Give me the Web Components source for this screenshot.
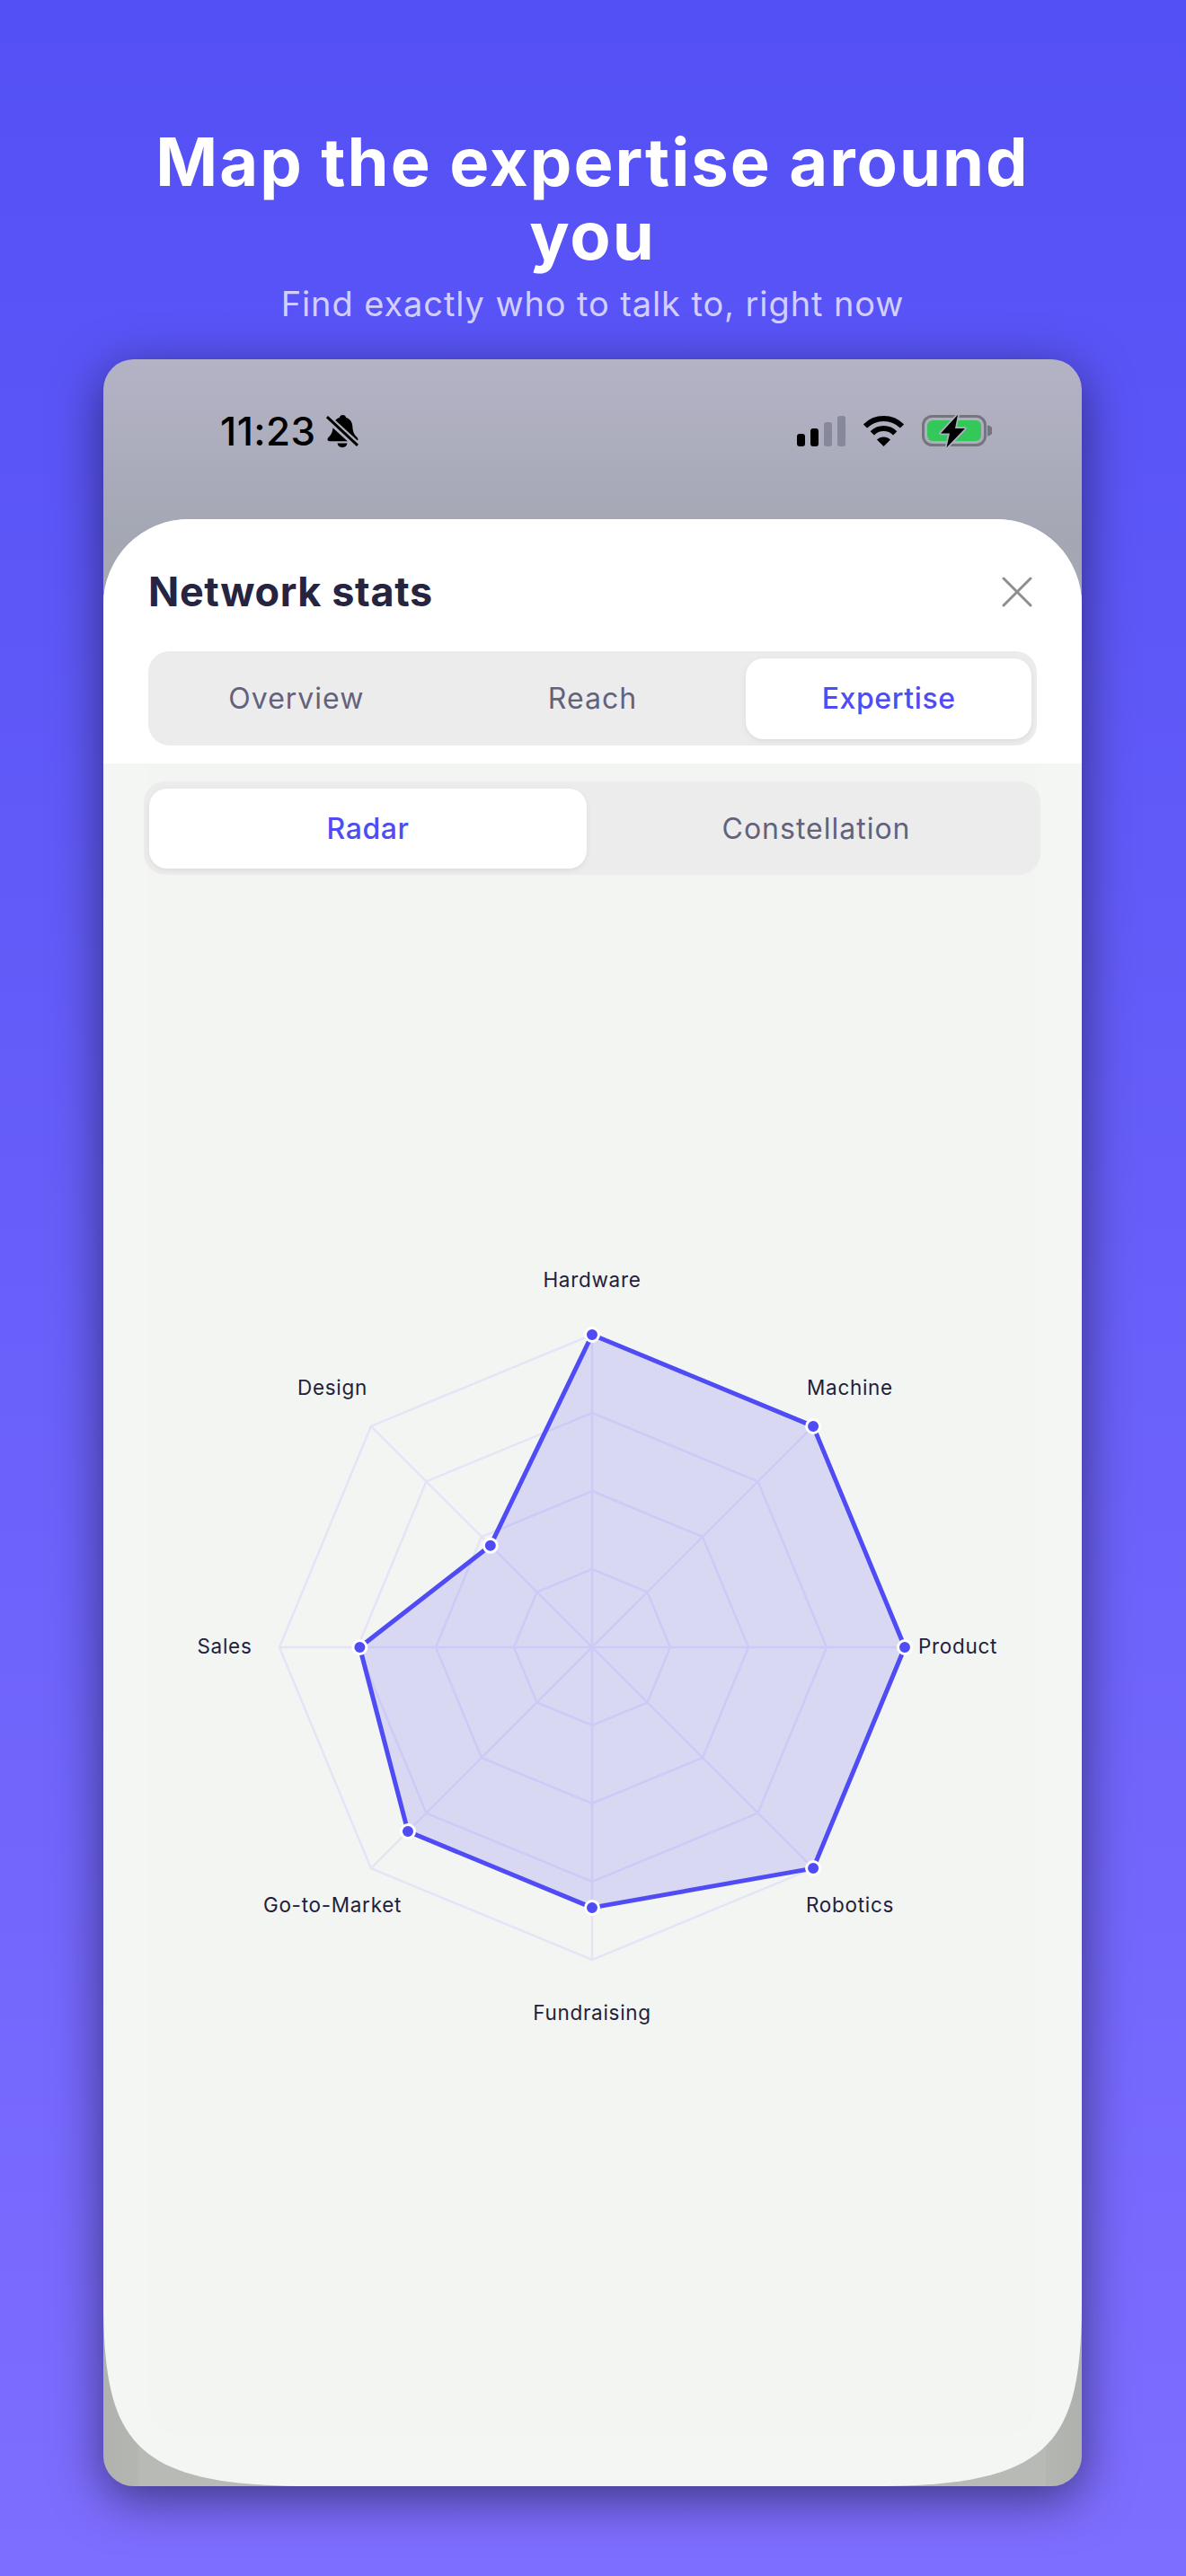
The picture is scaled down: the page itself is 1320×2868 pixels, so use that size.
<!DOCTYPE html>
<html lang="en">
<head>
<meta charset="utf-8">
<title>Network stats</title>
<style>
  html, body { margin: 0; padding: 0; }
  body { background: #5350f5; font-family: Inter, "Liberation Sans", sans-serif; }
</style>
</head>
<body>

<promo-page>
  <span slot="title">Map the expertise around you</span>
  <span slot="subtitle">Find exactly who to talk to, right now</span>
  <phone-frame>
    <status-bar time="11:23"></status-bar>
    <stats-sheet heading="Network stats">
      <seg-tabs slot="tabs" items="Overview,Reach,Expertise" active="2" style="height:105px"></seg-tabs>
      <seg-tabs slot="subtabs" items="Radar,Constellation" active="0" style="height:104px"></seg-tabs>
      <radar-chart></radar-chart>
    </stats-sheet>
  </phone-frame>
</promo-page>

<script>
// outer page: gradient, headline, subtitle, then the phone
class PromoPage extends HTMLElement {
  constructor() {
    super();
    this.attachShadow({ mode: "open" });
    this.shadowRoot.innerHTML = `
      <style>
        :host {
          display: flex;
          flex-direction: column;
          align-items: stretch;
          height: 2868px;
          box-sizing: border-box;
          padding: 139px 116px 100px 115px;
          background: linear-gradient(180deg, #5350f5 0%, #7e6eff 100%);
          overflow: hidden;
        }
        h1 {
          margin: 0;
          font-size: 74px;
          line-height: 82px;
          font-weight: 700;
          letter-spacing: 2px;
          text-align: center;
          color: #fff;
          padding: 0 40px;
        }
        p {
          margin: 9px 0 0;
          font-size: 38px;
          line-height: 52px;
          font-weight: 400;
          letter-spacing: .9px;
          text-align: center;
          color: #d2cffc;
        }
        .phone { margin-top: 36px; flex: 1; display: flex; min-height: 0; }
      </style>
      <h1><slot name="title"></slot></h1>
      <p><slot name="subtitle"></slot></p>
      <div class="phone"><slot></slot></div>
    `;
  }
}

class PhoneFrame extends HTMLElement {
  constructor() {
    super();
    this.attachShadow({ mode: "open" });
    this.shadowRoot.innerHTML = `
      <style>
        :host {
          display: flex;
          flex-direction: column;
          flex: 1;
          min-height: 0;
          border-radius: 34px;
          overflow: hidden;
          box-shadow: 0 14px 55px rgba(0,0,0,.5);
          background:
            linear-gradient(90deg, #b0b2ae 0, #b4b6b2 39px, transparent 39px, transparent 1049px, #b4b6b2 1049px, #afb1ad 100%) left bottom / 100% 240px no-repeat,
            linear-gradient(180deg, #b4b3c6 0, #a4a7b4 190px, #a9aba9 420px, #b8bab6 100%);
        }
      </style>
      <slot></slot>
    `;
  }
}

class StatusBar extends HTMLElement {
  constructor() {
    super();
    this.attachShadow({ mode: "open" });
  }
  connectedCallback() {
    const time = this.getAttribute("time") ?? "";
    this.shadowRoot.innerHTML = `
      <style>
        :host {
          display: flex;
          align-items: center;
          justify-content: space-between;
          height: 178px;
          box-sizing: border-box;
          padding: 0 100px 18px 130px;
          flex: none;
        }
        .left, .right { display: flex; align-items: center; }
        .time {
          font-size: 44px;
          font-weight: 500;
          line-height: 44px;
          letter-spacing: .4px;
          color: #000;
        }
        .bell { margin-left: 11px; }
        svg { display: block; }
        .wifi { margin-left: 19px; }
        .battery { margin-left: 19px; }
      </style>
      <div class="left">
        <span class="time">${time}</span>
        <svg class="bell" width="36" height="38" viewBox="0 0 36 38">
          <path d="M18.5 1c-1.900 0-3.300 1.300-3.700 3C10.300 5.200 8 9.200 7.700 13.500c-.4 5.700-1.300 8.400-4 11.200C2.400 26 1.500 27 1.500 28.300c0 1.100.8 1.900 2.200 1.900h29.600c1.400 0 2.200-.8 2.200-1.900 0-1.300-.9-2.300-2.200-3.600-2.700-2.800-3.600-5.500-4-11.200C29 9.200 26.700 5.200 22.200 4c-.4-1.700-1.800-3-3.700-3z" fill="#000"/>
          <path d="M12.500 32.500h11c-.4 2.800-2.700 4.700-5.500 4.700s-5.100-1.900-5.500-4.700z" fill="#000"/>
          <path d="M0 3l36 33" stroke="#adaebe" stroke-width="8"/>
          <path d="M1 3.200l34 31.600" stroke="#000" stroke-width="3"/>
        </svg>
      </div>
      <div class="right">
        <svg width="54" height="36" viewBox="0 0 54 36">
          <rect x="0" y="21" width="9" height="14" rx="3" fill="#000"/>
          <rect x="15" y="15" width="9" height="20" rx="3" fill="#000"/>
          <rect x="30" y="8" width="9" height="27" rx="3" fill="#87899a"/>
          <rect x="45" y="1" width="9" height="34" rx="3" fill="#87899a"/>
        </svg>
        <svg class="wifi" width="47" height="36" viewBox="0 0 47 36">
          <path d="M3 12.500A29 29 0 0 1 44 12.500" fill="none" stroke="#000" stroke-width="6"/>
          <path d="M10.800 20.300A18 18 0 0 1 36.200 20.300" fill="none" stroke="#000" stroke-width="6"/>
          <path d="M23.500 35L16 27.500A10.600 10.600 0 0 1 31 27.500z" fill="#000"/>
        </svg>
        <svg class="battery" width="78" height="38" viewBox="0 0 78 38">
          <rect x="1.500" y="2.500" width="69" height="32" rx="10" fill="none" stroke="#74757d" stroke-width="3"/>
          <rect x="6" y="7" width="60" height="23" rx="6" fill="#34c759"/>
          <path d="M73 12.500a6 6 0 0 1 0 12z" fill="#74757d"/>
          <path d="M40 .8L21 21.500h10L27.500 37.300 48 16H37z" fill="#000" stroke="#aeafbf" stroke-width="3.500" paint-order="stroke" stroke-linejoin="round"/>
        </svg>
      </div>
    `;
  }
}

class StatsSheet extends HTMLElement {
  constructor() {
    super();
    this.attachShadow({ mode: "open" });
  }
  connectedCallback() {
    const heading = this.getAttribute("heading") ?? "";
    this.shadowRoot.innerHTML = `
      <style>
        :host {
          display: flex;
          flex-direction: column;
          flex: 1;
          min-height: 0;
          background: #f4f6f3;
          /* soft bottom corners, a plain radius is too round there */
          clip-path: path("M0 95A95 95 0 0 1 95 0H994A95 95 0 0 1 1089 95V1980C1089 2140 1059 2190 859 2190H230C30 2190 0 2140 0 1980Z");
        }
        .top {
          background: #fff;
          padding: 0 50px 20px;
          flex: none;
        }
        .head {
          display: flex;
          align-items: center;
          justify-content: space-between;
          height: 147px;
          padding-top: 15px;
          box-sizing: border-box;
        }
        h2 {
          margin: 0;
          font-size: 45px;
          line-height: 56px;
          font-weight: 700;
          letter-spacing: .6px;
          color: #26243f;
        }
        .close { margin-right: 5px; display: block; }
        .body {
          flex: 1;
          min-height: 0;
          display: flex;
          flex-direction: column;
          margin: 0 51px 55px 50px;
          padding: 20px 0 19px;
          background: #f3f5f2;
          border-radius: 0 0 40px 40px;
        }
        .sub { margin: 0 -5px 0 -5px; }
        .chart {
          flex: 1;
          display: flex;
          align-items: center;
          justify-content: center;
          min-height: 0;
        }
      </style>
      <div class="top">
        <div class="head">
          <h2>${heading}</h2>
          <svg class="close" width="34" height="34" viewBox="0 0 34 34">
            <path d="M2 2l30 30M32 2L2 32" stroke="#8e8e8e" stroke-width="3" stroke-linecap="round" fill="none"/>
          </svg>
        </div>
        <slot name="tabs"></slot>
      </div>
      <div class="body">
        <div class="sub"><slot name="subtabs"></slot></div>
        <div class="chart"><slot></slot></div>
      </div>
    `;
  }
}

class SegTabs extends HTMLElement {
  constructor() {
    super();
    this.attachShadow({ mode: "open" });
  }
  connectedCallback() {
    const items = (this.getAttribute("items") ?? "").split(",");
    const active = Number(this.getAttribute("active") ?? 0);
    const buttons = items.map((label, i) =>
      `<div class="tab${i === active ? " on" : ""}">${label}</div>`).join("");
    this.shadowRoot.innerHTML = `
      <style>
        :host {
          display: grid;
          grid-template-columns: repeat(${items.length}, 1fr);
          background: #ececec;
          border-radius: 24px;
        }
        .tab {
          display: flex;
          align-items: center;
          justify-content: center;
          margin: 7.5px 6px;
          border-radius: 20px;
          font-size: 32px;
          font-weight: 400;
          letter-spacing: 1px;
          color: #63627c;
        }
        .on {
          background: #fff;
          color: #4f4bf5;
          font-weight: 500;
          letter-spacing: .6px;
          box-shadow: 0 2px 6px rgba(0,0,0,.07);
        }
      </style>
      ${buttons}
    `;
  }
}

class RadarChart extends HTMLElement {
  constructor() {
    super();
    this.attachShadow({ mode: "open" });
  }
  connectedCallback() {
    const R = 348, C = 450, RINGS = 4;
    // clockwise from the top
    const axes = [
      { v: 1,     label: "Hardware",     x: 0,    y: -401 },
      { v: 1,     label: "Machine",      x: 287,  y: -281 },
      { v: 1,     label: "Product",      x: 407,  y: 7 },
      { v: 1,     label: "Robotics",     x: 287,  y: 295 },
      { v: 0.833, label: "Fundraising",  x: 0,    y: 415 },
      { v: 0.833, label: "Go-to-Market", x: -289, y: 295 },
      { v: 0.743, label: "Sales",        x: -409, y: 7 },
      { v: 0.46,  label: "Design",       x: -289, y: -281 },
    ];
    const pt = (i, r) => {
      const a = -Math.PI / 2 + i * Math.PI / 4;
      return [C + r * Math.cos(a), C + r * Math.sin(a)];
    };
    const poly = fn => axes.map((ax, i) => pt(i, fn(ax)).map(n => n.toFixed(1)).join(",")).join(" ");

    let grid = "";
    for (let k = 1; k <= RINGS; k++) {
      grid += `<polygon points="${poly(() => R * k / RINGS)}"/>`;
    }
    axes.forEach((ax, i) => {
      const [x, y] = pt(i, R);
      grid += `<line x1="${C}" y1="${C}" x2="${x.toFixed(1)}" y2="${y.toFixed(1)}"/>`;
    });
    const dots = axes.map((ax, i) => {
      const [x, y] = pt(i, R * ax.v);
      return `<circle cx="${x.toFixed(1)}" cy="${y.toFixed(1)}" r="7.5"/>`;
    }).join("");
    const labels = axes.map(ax =>
      `<text x="${C + ax.x}" y="${C + ax.y}">${ax.label}</text>`).join("");

    this.shadowRoot.innerHTML = `
      <style>
        :host { display: block; width: 900px; height: 900px; flex: none; }
        svg { display: block; overflow: visible; }
        .grid polygon, .grid line { fill: none; stroke: #e5e4f7; stroke-width: 2.5; }
        .area { fill: rgba(79,75,245,.165); stroke: #4f4bf5; stroke-width: 5; stroke-linejoin: round; }
        .dots circle { fill: #4f4bf5; stroke: #fff; stroke-width: 3; }
        text {
          font-family: Inter, "Liberation Sans", sans-serif;
          font-size: 22.5px;
          font-weight: 400;
          fill: #22213c;
          text-anchor: middle;
          letter-spacing: .7px;
        }
      </style>
      <svg width="900" height="900" viewBox="0 0 900 900">
        <g class="grid">${grid}</g>
        <polygon class="area" points="${poly(ax => R * ax.v)}"/>
        <g class="dots">${dots}</g>
        ${labels}
      </svg>
    `;
  }
}

customElements.define("promo-page", PromoPage);
customElements.define("phone-frame", PhoneFrame);
customElements.define("status-bar", StatusBar);
customElements.define("stats-sheet", StatsSheet);
customElements.define("seg-tabs", SegTabs);
customElements.define("radar-chart", RadarChart);
</script>
</body>
</html>
